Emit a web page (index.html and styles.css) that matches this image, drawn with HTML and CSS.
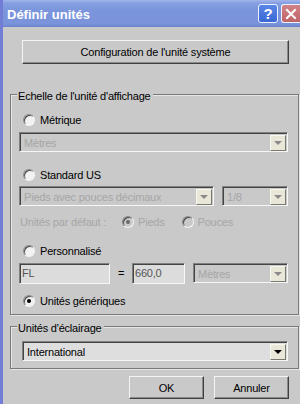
FILE: index.html
```html
<!DOCTYPE html>
<html lang="fr">
<head>
<meta charset="utf-8">
<title>Définir unités</title>
<link rel="stylesheet" href="styles.css">
</head>
<body>
<div class="window">
  <div class="titlebar">
    <span class="title">Définir unités</span>
    <div class="tb-buttons">
      <span class="tb-btn help">?</span>
      <span class="tb-btn close"><svg width="12" height="12" viewBox="0 0 12 12"><path d="M2 2 L10 10 M10 2 L2 10" stroke="#fff" stroke-width="2" stroke-linecap="square"/></svg></span>
    </div>
  </div>
  <div class="content">
    <div class="btn config">Configuration de l'unité système</div>

    <div class="group g1">
      <div class="legend">Echelle de l'unité d'affichage</div>

      <div class="radio-row row-metric"><span class="radio"></span><span class="lbl">Métrique</span></div>
      <div class="select disabled sel-metres"><span class="val">Mètres</span><span class="arrow"><i></i></span></div>

      <div class="radio-row row-us"><span class="radio"></span><span class="lbl">Standard US</span></div>
      <div class="field-row row-pieds">
        <div class="select disabled sel-pieds"><span class="val">Pieds avec pouces décimaux</span><span class="arrow"><i></i></span></div>
        <div class="select disabled sel-frac"><span class="val">1/8</span><span class="arrow"><i></i></span></div>
      </div>

      <div class="default-row">
        <span class="def-lbl">Unités par défaut :</span>
        <span class="radio disabled checked r-pieds"></span><span class="lbl dis">Pieds</span>
        <span class="radio disabled r-pouces"></span><span class="lbl dis">Pouces</span>
      </div>

      <div class="radio-row row-custom"><span class="radio"></span><span class="lbl">Personnalisé</span></div>
      <div class="field-row row-fl">
        <div class="text-box box-fl">FL</div>
        <span class="eq">=</span>
        <div class="text-box box-num">660,0</div>
        <div class="select disabled sel-custom"><span class="val">Mètres</span><span class="arrow"><i></i></span></div>
      </div>

      <div class="radio-row row-gen"><span class="radio checked"></span><span class="lbl">Unités génériques</span></div>
    </div>

    <div class="group g2">
      <div class="legend">Unités d'éclairage</div>
      <div class="select sel-intl"><span class="val">International</span><span class="arrow"><i></i></span></div>
    </div>

    <div class="actions">
      <div class="btn act">OK</div>
      <div class="btn act">Annuler</div>
    </div>
  </div>
</div>
</body>
</html>
```

FILE: styles.css
```css
* { box-sizing: border-box; }

html, body {
  margin: 0;
  padding: 0;
  background: #c9c9c9;
}

body {
  font-family: "Liberation Sans", Arial, sans-serif;
  font-size: 11px;
  letter-spacing: -0.2px;
  color: #000;
}

.window {
  width: 300px;
  height: 404px;
  border-left: 3px solid #727ed6;
  background: #c9c9c9;
  overflow: hidden;
}

.titlebar {
  height: 27px;
  display: flex;
  align-items: center;
  justify-content: space-between;
  padding-left: 4px;
  background: linear-gradient(#a3b5ea 0px, #86a0e2 3px, #7b95dc 10px, #7a93da 24px, #6a82cc 27px);
}

.title {
  font-family: "Liberation Sans", Arial, sans-serif;
  font-weight: bold;
  font-size: 13px;
  letter-spacing: 0;
  color: #fff;
  margin-top: 1px;
}

.tb-buttons {
  display: flex;
  gap: 3px;
  align-self: flex-start;
  margin-top: 4px;
}

.tb-btn {
  width: 20px;
  height: 19px;
  border: 1px solid #eef2ff;
  border-radius: 3px;
  display: flex;
  align-items: center;
  justify-content: center;
  color: #fff;
}

.help {
  background: linear-gradient(#5b86e6, #3a68d4);
  font-family: "Liberation Sans", Arial, sans-serif;
  font-weight: bold;
  font-size: 15px;
  letter-spacing: 0;
}

.close {
  width: 19px;
  border-right: none;
  border-radius: 3px 0 0 3px;
  background: linear-gradient(#d08286, #c06468);
}

.content {
  padding-left: 7px;
}

/* Raised button */
.btn {
  display: flex;
  align-items: center;
  justify-content: center;
  background: #c9c9c9;
  border: 1px solid;
  border-color: #f4f4f4 #404040 #404040 #f4f4f4;
  box-shadow: inset -1px -1px 0 #8a8a8a;
}

.config {
  margin: 13px 0 0 12px;
  width: 267px;
  height: 24px;
}

/* Group boxes */
.group {
  width: 289px;
  border: 1px solid #7a7a7a;
  box-shadow: inset 1px 1px 0 #e6e6e6, 1px 1px 0 #e6e6e6;
}

.g1 {
  margin-top: 30px;
  padding-bottom: 6px;
}

.g2 {
  margin-top: 11px;
  padding-bottom: 7px;
}

.legend {
  width: max-content;
  margin: -6px 0 0 6px;
  padding: 0 2px 0 1px;
  line-height: 14px;
  background: #c9c9c9;
}

/* Radio rows */
.radio-row {
  display: flex;
  align-items: center;
  height: 14px;
  line-height: 14px;
  padding-left: 12px;
}

.radio {
  flex: none;
  position: relative;
  width: 12px;
  height: 12px;
  border-radius: 50%;
  border: 1px solid;
  border-color: #8a8a8a #f4f4f4 #f4f4f4 #8a8a8a;
  background: #f2f2f2;
  box-shadow: inset 1px 1px 0 #4a4a4a;
}

.radio.disabled {
  background: #c9c9c9;
}

.radio.checked::after {
  content: "";
  position: absolute;
  left: 3px;
  top: 3px;
  width: 4px;
  height: 4px;
  border-radius: 50%;
  background: #000;
}

.radio.disabled.checked::after {
  background: #6a6a6a;
}

.lbl {
  margin-left: 5px;
}

.lbl.dis {
  color: #a6a6a6;
}

.row-metric { margin-top: 10px; }
.row-us { margin-top: 16px; }
.row-custom { margin-top: 15px; }
.row-gen { margin-top: 10px; }

/* Selects */
.select {
  display: flex;
  align-items: center;
  justify-content: space-between;
  height: 20px;
  border: 1px solid;
  border-color: #808080 #f6f6f6 #f6f6f6 #808080;
  box-shadow: inset 1px 1px 0 #444;
  background: #dedede;
  padding: 1px 1px 1px 4px;
}

.select.disabled {
  background: #c9c9c9;
  color: #a6a6a6;
}

.select .val {
  white-space: nowrap;
  overflow: hidden;
  padding-top: 1px;
}

.arrow {
  flex: none;
  width: 16px;
  height: 16px;
  margin-top: 1px;
  background: #e9e8d8;
  border: 1px solid;
  border-color: #f8f8f0 #7a7a70 #7a7a70 #f8f8f0;
  display: flex;
  align-items: center;
  justify-content: center;
}

.arrow i {
  width: 0;
  height: 0;
  border-left: 4px solid transparent;
  border-right: 4px solid transparent;
  border-top: 4px solid #000;
  margin-top: 1px;
}

.select.disabled .arrow i {
  border-top-color: #8a8a8a;
}

.sel-metres {
  margin: 5px 0 0 8px;
  width: 269px;
}

.field-row {
  display: flex;
  align-items: flex-start;
  margin-left: 8px;
}

.row-pieds {
  margin-top: 4px;
  gap: 8px;
}

.sel-pieds { width: 195px; }
.sel-frac { width: 66px; }

.default-row {
  display: flex;
  align-items: center;
  height: 14px;
  line-height: 14px;
  margin-top: 9px;
  padding-left: 9px;
  color: #a6a6a6;
}

.def-lbl { width: 102px; }
.r-pouces { margin-left: 17px; }
.default-row .lbl { margin-left: 4px; }

.row-fl {
  margin-top: 5px;
}

.text-box {
  height: 21px;
  line-height: 19px;
  padding-left: 2px;
  background: #dcdcdc;
  border: 1px solid;
  border-color: #808080 #f6f6f6 #f6f6f6 #808080;
  box-shadow: inset 1px 1px 0 #444;
  color: #555;
}

.box-fl { width: 91px; }
.eq {
  width: 22px;
  text-align: center;
  line-height: 21px;
}
.box-num { width: 53px; }
.sel-custom {
  margin-left: 8px;
  width: 95px;
}

.sel-intl {
  margin: 6px 0 0 11px;
  width: 266px;
}

.actions {
  display: flex;
  gap: 10px;
  margin: 7px 0 0 119px;
}

.act {
  width: 75px;
  height: 23px;
}
```
